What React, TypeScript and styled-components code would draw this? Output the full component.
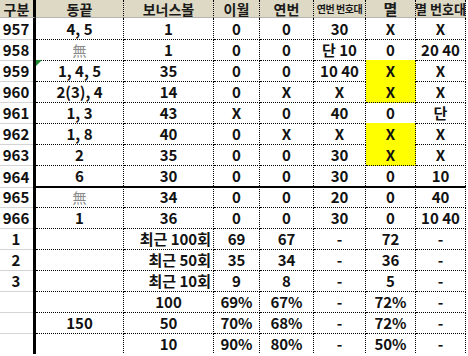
import React from "react";
import styled, { createGlobalStyle, css } from "styled-components";

const Global = createGlobalStyle`
  html, body { margin: 0; padding: 0; background: #ffffff; }
  body { font-family: "Noto Sans CJK KR", "Noto Sans", sans-serif; color: #111; }
`;

const COLS = "36px 88px 90px 46px 54px 52px 50px 50px";

const Sheet = styled.div`
  width: 466px;
  display: flex;
  flex-direction: column;
`;

const HeaderRow = styled.div`
  display: grid;
  grid-template-columns: ${COLS};
  height: 18px;
  background: #ddd9c4;
`;

const HeaderCell = styled.div<{ $size?: number; $first?: boolean }>`
  box-sizing: border-box;
  display: flex;
  align-items: center;
  justify-content: center;
  padding-top: 1px;
  font-size: ${(p) => p.$size ?? 14}px;
  font-weight: 700;
  line-height: 16px;
  color: #1a1a1a;
  border-bottom: 1px solid #b5b5b5;
  border-right: ${(p) => (p.$first ? "3px solid #000" : "1px dotted #000")};
  white-space: nowrap;
  letter-spacing: ${(p) => ((p.$size ?? 14) < 12 ? "-0.5px" : "0")};
`;

const Row = styled.div`
  display: grid;
  grid-template-columns: ${COLS};
  height: 21px;
`;

const IndexCell = styled.div`
  box-sizing: border-box;
  display: flex;
  align-items: center;
  justify-content: center;
  font-size: 15px;
  font-weight: 700;
  border-right: 3px solid #000;
  border-bottom: 1px solid #d4d4d4;
  padding-right: 1px;
`;

const Cell = styled.div<{
  $thick?: boolean;
  $yellow?: boolean;
  $right?: boolean;
  $muted?: boolean;
  $flag?: boolean;
}>`
  position: relative;
  box-sizing: border-box;
  display: flex;
  align-items: center;
  justify-content: ${(p) => (p.$right ? "flex-end" : "center")};
  padding-right: ${(p) => (p.$right ? "2px" : "0")};
  font-size: 15px;
  font-weight: 700;
  white-space: nowrap;
  background: ${(p) => (p.$yellow ? "#ffff00" : "transparent")};
  border-right: 1px dotted #000;
  border-bottom: ${(p) => (p.$thick ? "2px solid #000" : "1px dotted #000")};
  ${(p) =>
    p.$muted &&
    css`
      color: #8a8a8a;
      font-weight: 400;
      font-size: 14px;
    `}
  ${(p) =>
    p.$flag &&
    css`
      &::before {
        content: "";
        position: absolute;
        top: 0;
        left: 0;
        border-top: 6px solid #1e8a2e;
        border-right: 6px solid transparent;
      }
    `}
`;

type RowData = {
  idx: string;
  cells: string[];
  yellow?: boolean;
  thick?: boolean;
  flag?: boolean;
  rightBonus?: boolean;
};

const rows: RowData[] = [
  { idx: "957", cells: ["4, 5", "1", "0", "0", "30", "X", "X"] },
  { idx: "958", cells: ["無", "1", "0", "0", "단 10", "0", "20 40"] },
  { idx: "959", cells: ["1, 4, 5", "35", "0", "0", "10 40", "X", "X"], yellow: true, flag: true },
  { idx: "960", cells: ["2(3), 4", "14", "0", "X", "X", "X", "X"], yellow: true },
  { idx: "961", cells: ["1, 3", "43", "X", "0", "40", "0", "단"] },
  { idx: "962", cells: ["1, 8", "40", "0", "X", "X", "X", "X"], yellow: true },
  { idx: "963", cells: ["2", "35", "0", "0", "30", "X", "X"], yellow: true },
  { idx: "964", cells: ["6", "30", "0", "0", "30", "0", "10"], thick: true },
  { idx: "965", cells: ["無", "34", "0", "0", "20", "0", "40"] },
  { idx: "966", cells: ["1", "36", "0", "0", "30", "0", "10 40"] },
  { idx: "1", cells: ["", "최근 100회", "69", "67", "-", "72", "-"], rightBonus: true },
  { idx: "2", cells: ["", "최근 50회", "35", "34", "-", "36", "-"], rightBonus: true },
  { idx: "3", cells: ["", "최근 10회", "9", "8", "-", "5", "-"], rightBonus: true },
  { idx: "", cells: ["", "100", "69%", "67%", "-", "72%", "-"] },
  { idx: "", cells: ["150", "50", "70%", "68%", "-", "72%", "-"] },
  { idx: "", cells: ["", "10", "90%", "80%", "-", "50%", "-"] },
];

const headers: { label: string; size?: number }[] = [
  { label: "동끝" },
  { label: "보너스볼" },
  { label: "이월" },
  { label: "연번" },
  { label: "연번 번호대", size: 10 },
  { label: "멸", size: 15 },
  { label: "멸 번호대", size: 13 },
];

export default function App() {
  return (
    <>
      <Global />
      <Sheet>
        <HeaderRow>
          <HeaderCell $first>구분</HeaderCell>
          {headers.map((h) => (
            <HeaderCell key={h.label} $size={h.size}>
              {h.label}
            </HeaderCell>
          ))}
        </HeaderRow>
        {rows.map((r, i) => (
          <Row key={i}>
            <IndexCell>{r.idx}</IndexCell>
            {r.cells.map((c, j) => (
              <Cell
                key={j}
                $thick={r.thick}
                $yellow={r.yellow && j === 5}
                $right={r.rightBonus && j === 1}
                $muted={c === "無"}
                $flag={r.flag && j === 0}
              >
                {c}
              </Cell>
            ))}
          </Row>
        ))}
      </Sheet>
    </>
  );
}
